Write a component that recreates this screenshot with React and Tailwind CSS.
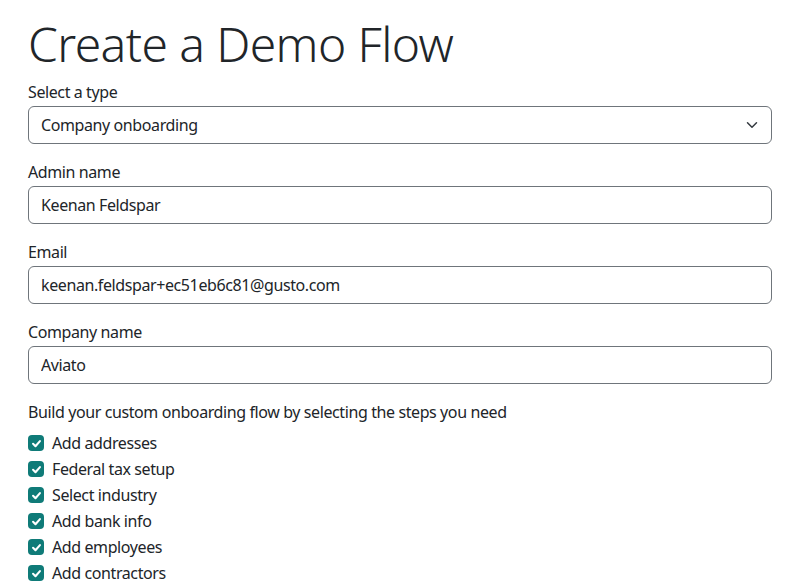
import { useState } from "react";

const steps = [
  "Add addresses",
  "Federal tax setup",
  "Select industry",
  "Add bank info",
  "Add employees",
  "Add contractors",
];

function Field({ label, value, onChange, last }) {
  return (
    <div className={last ? "" : "mb-[18px]"}>
      <label className="block mb-[4px] leading-[20px]">{label}</label>
      <input
        value={value}
        onChange={(e) => onChange(e.target.value)}
        className="block w-full h-[38px] px-[12px] border border-[#6f757b] rounded-[6px] text-[#212529] outline-none tracking-[-0.4px]"
      />
    </div>
  );
}

export default function App() {
  const [admin, setAdmin] = useState("Keenan Feldspar");
  const [email, setEmail] = useState("keenan.feldspar+ec51eb6c81@gusto.com");
  const [company, setCompany] = useState("Aviato");
  const [checked, setChecked] = useState(steps.map(() => true));

  return (
    <div
      className="min-h-screen bg-white text-[#212529] text-[16px] tracking-[-0.4px]"
      style={{ fontFamily: '"Noto Sans", "Open Sans", sans-serif' }}
    >
      <div className="w-[744px] ml-[28px] pt-[15px]">
        <h1 className="text-[48px] font-light leading-[57px] mb-[10px] tracking-[-0.6px]">
          Create a Demo Flow
        </h1>

        <div className="mb-[18px]">
          <label className="block mb-[4px] leading-[20px]">Select a type</label>
          <div className="relative">
            <select className="block w-full h-[38px] pl-[12px] pr-[36px] border border-[#6f757b] rounded-[6px] appearance-none bg-white outline-none tracking-[-0.4px]">
              <option>Company onboarding</option>
            </select>
            <svg
              className="absolute right-[12px] top-[13px] pointer-events-none"
              width="16"
              height="12"
              viewBox="0 0 16 16"
              fill="none"
              stroke="#343a40"
              strokeWidth="2"
              strokeLinecap="round"
              strokeLinejoin="round"
            >
              <path d="M2 5l6 6 6-6" />
            </svg>
          </div>
        </div>

        <Field label="Admin name" value={admin} onChange={setAdmin} />
        <Field label="Email" value={email} onChange={setEmail} />
        <Field label="Company name" value={company} onChange={setCompany} last />

        <p className="leading-[24px] mt-[16px] mb-[6px]">
          Build your custom onboarding flow by selecting the steps you need
        </p>
        <div className="flex flex-col">
          {steps.map((s, i) => (
            <label key={s} className="flex items-center gap-[8px] h-[26px]">
              <span
                onClick={() =>
                  setChecked((c) => c.map((v, j) => (j === i ? !v : v)))
                }
                className={`w-[16px] h-[16px] rounded-[4px] flex items-center justify-center ${
                  checked[i] ? "bg-[#0f7b78]" : "border border-[#6f757b]"
                }`}
              >
                {checked[i] && (
                  <svg width="11" height="11" viewBox="0 0 16 16" fill="none" stroke="#fff" strokeWidth="3" strokeLinecap="round" strokeLinejoin="round">
                    <path d="M3 8.5l3.5 3.5L13 4.5" />
                  </svg>
                )}
              </span>
              <span>{s}</span>
            </label>
          ))}
        </div>
      </div>
    </div>
  );
}
